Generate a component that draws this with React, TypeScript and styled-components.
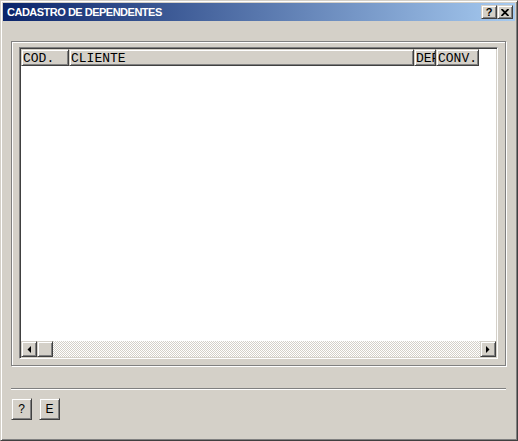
import React from 'react';
import styled, { createGlobalStyle, css } from 'styled-components';

const GlobalStyle = createGlobalStyle`
  html, body { margin: 0; padding: 0; background: #d4d0c8; }
  body { font-family: "Liberation Sans", Arial, sans-serif; }
`;

const raised = css`
  background: #d4d0c8;
  border-top: 1px solid #d4d0c8;
  border-left: 1px solid #d4d0c8;
  border-right: 1px solid #404040;
  border-bottom: 1px solid #404040;
  box-shadow: inset 1px 1px 0 #fff, inset -1px -1px 0 #808080;
  box-sizing: border-box;
`;

const Window = styled.div`
  width: 518px;
  height: 441px;
  box-sizing: border-box;
  background: #d4d0c8;
  border-top: 1px solid #d4d0c8;
  border-left: 1px solid #d4d0c8;
  border-right: 1px solid #404040;
  border-bottom: 1px solid #404040;
  box-shadow: inset 1px 1px 0 #fff, inset -1px -1px 0 #808080;
  padding: 2px 2px 0 2px;
  display: flex;
  flex-direction: column;
`;

const TitleBar = styled.div`
  height: 18px;
  display: flex;
  align-items: center;
  padding-left: 4px;
  padding-right: 2px;
  background: linear-gradient(to right, #0a246a, #a6caf0);
`;

const Title = styled.span`
  flex: 1;
  color: #fff;
  font-weight: bold;
  font-size: 11px;
  letter-spacing: -0.5px;
  white-space: nowrap;
`;

const CaptionButton = styled.button`
  ${raised};
  width: 16px;
  height: 14px;
  padding: 0;
  display: flex;
  align-items: center;
  justify-content: center;
  font-family: "Liberation Sans", Arial, sans-serif;
  font-weight: bold;
  font-size: 11px;
  color: #000;
  line-height: 1;
`;

const Client = styled.div`
  flex: 1;
  display: flex;
  flex-direction: column;
  padding: 20px 0 0 8px;
`;

const GroupBox = styled.div`
  width: 495px;
  height: 325px;
  box-sizing: border-box;
  border: 1px solid #808080;
  box-shadow: inset 1px 1px 0 #fff, 1px 1px 0 #fff;
  padding: 5px 0 0 7px;
`;

const ListView = styled.div`
  width: 479px;
  height: 312px;
  box-sizing: border-box;
  border-top: 1px solid #808080;
  border-left: 1px solid #808080;
  border-right: 1px solid #fff;
  border-bottom: 1px solid #fff;
  box-shadow: inset 1px 1px 0 #404040, inset -1px -1px 0 #d4d0c8;
  padding: 1px;
  display: flex;
  flex-direction: column;
  background: #fff;
`;

const HeaderRow = styled.div`
  display: flex;
  height: 17px;
  background: #fff;
`;

const HeaderCell = styled.div<{ $w: number }>`
  ${raised};
  width: ${(p) => p.$w}px;
  flex: none;
  height: 17px;
  overflow: hidden;
  white-space: nowrap;
  padding: 2px 0 0 1px;
  font-family: "Liberation Mono", "Courier New", monospace;
  font-size: 13px;
  line-height: 13px;
  color: #000;
`;

const Rows = styled.div`
  flex: 1;
  background: #fff;
`;

const HScroll = styled.div`
  height: 16px;
  display: flex;
  background: repeating-conic-gradient(#fff 0 25%, #d4d0c8 0 50%) 0 0 / 2px 2px;
`;

const ScrollButton = styled.div`
  ${raised};
  width: 16px;
  height: 16px;
  flex: none;
  display: flex;
  align-items: center;
  justify-content: center;
`;

const Track = styled.div`
  flex: 1;
`;

const Separator = styled.div`
  width: 495px;
  height: 1px;
  margin-top: 22px;
  background: #808080;
  border-bottom: 1px solid #fff;
`;

const ButtonRow = styled.div`
  display: flex;
  gap: 7px;
  margin-top: 8px;
`;

const PushButton = styled.button`
  ${raised};
  width: 21px;
  height: 22px;
  padding: 0;
  font-family: "Liberation Sans", Arial, sans-serif;
  font-size: 12px;
  color: #000;
  display: flex;
  align-items: center;
  justify-content: center;
`;

const Arrow = ({ dir }: { dir: 'left' | 'right' }) => (
  <svg width="4" height="7" viewBox="0 0 4 7">
    {dir === 'left' ? (
      <polygon points="4,0 4,7 0.5,3.5" fill="#000" />
    ) : (
      <polygon points="0,0 0,7 3.5,3.5" fill="#000" />
    )}
  </svg>
);

const CloseGlyph = () => (
  <svg width="8" height="7" viewBox="0 0 8 7">
    <path d="M0.5 0 L7.5 7 M7.5 0 L0.5 7" stroke="#000" strokeWidth="1.8" />
  </svg>
);

const columns = [
  { label: 'COD.', w: 48 },
  { label: 'CLIENTE', w: 345 },
  { label: 'DEPENDENTE', w: 22 },
  { label: 'CONV.', w: 43 },
];

export default function App() {
  return (
    <>
      <GlobalStyle />
      <Window>
        <TitleBar>
          <Title>CADASTRO DE DEPENDENTES</Title>
          <CaptionButton>?</CaptionButton>
          <CaptionButton>
            <CloseGlyph />
          </CaptionButton>
        </TitleBar>
        <Client>
          <GroupBox>
            <ListView>
              <HeaderRow>
                {columns.map((c) => (
                  <HeaderCell key={c.label} $w={c.w}>
                    {c.label}
                  </HeaderCell>
                ))}
              </HeaderRow>
              <Rows />
              <HScroll>
                <ScrollButton>
                  <Arrow dir="left" />
                </ScrollButton>
                <ScrollButton />
                <Track />
                <ScrollButton>
                  <Arrow dir="right" />
                </ScrollButton>
              </HScroll>
            </ListView>
          </GroupBox>
          <Separator />
          <ButtonRow>
            <PushButton>?</PushButton>
            <PushButton>E</PushButton>
          </ButtonRow>
        </Client>
      </Window>
    </>
  );
}
